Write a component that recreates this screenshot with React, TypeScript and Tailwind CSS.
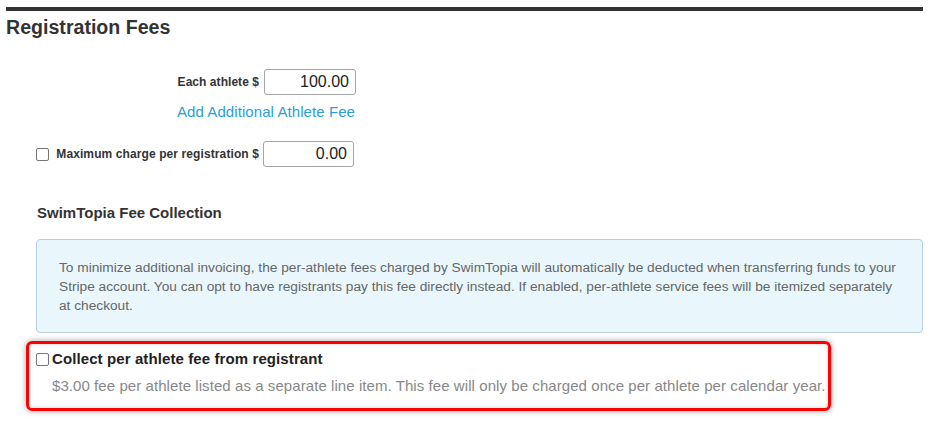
import React from "react";

function Box() {
  return <span className="block w-[13px] h-[13px] shrink-0 rounded-[2px] border border-[#767676] bg-white" />;
}

export default function App() {
  return (
    <div className="min-h-[422px] bg-white font-['Liberation_Sans',Arial,sans-serif] text-[#333]">
      <div className="pt-[7px] ml-[6px] w-[917px]">
        <div className="border-t-4 border-[#333]" />
        <h1 className="mt-[5px] text-[19.6px] leading-[22px] font-bold text-[#333]">Registration Fees</h1>

        <div className="mt-[31px] flex items-center h-[26px]">
          <div className="w-[253px] text-right text-[12px] font-bold leading-[14px] tracking-[0.05px]">Each athlete $</div>
          <div className="ml-[5px] w-[92px] h-[26px] rounded-[3px] border border-[#a5a5a5] bg-white text-right pr-[6px] text-[16px] leading-[24px] text-[#222]">
            100.00
          </div>
        </div>
        <div className="mt-[8px] flex">
          <div className="w-[349px] text-right text-[15px] leading-[18px] text-[#2a9fd6] tracking-[0.08px]">Add Additional Athlete Fee</div>
        </div>

        <div className="mt-[20px] flex items-center h-[26px]">
          <div className="w-[253px] flex items-center justify-end">
            <Box />
            <span className="ml-[7px] text-[12px] font-bold leading-[14px] whitespace-nowrap tracking-[0.1px]">Maximum charge per registration $</span>
          </div>
          <div className="ml-[4px] w-[91px] h-[26px] rounded-[3px] border border-[#a5a5a5] bg-white text-right pr-[6px] text-[16px] leading-[24px] text-[#222]">
            0.00
          </div>
        </div>

        <h2 className="mt-[37px] ml-[31px] text-[15px] leading-[18px] font-bold text-[#333]">SwimTopia Fee Collection</h2>

        <div className="mt-[17px] ml-[30px] w-[887px] rounded-[4px] border border-[#b9cfe0] bg-[#e9f7fd] pl-[22px] pr-[10px] pt-[18px] pb-[17px] text-[13.7px] leading-[19px] text-[#666] whitespace-nowrap">
          To minimize additional invoicing, the per-athlete fees charged by SwimTopia will automatically be deducted when transferring funds to your
          <br />
          Stripe account. You can opt to have registrants pay this fee directly instead. If enabled, per-athlete service fees will be itemized separately
          <br />
          at checkout.
        </div>

        <div className="mt-[8px] ml-[20px] w-[805px] rounded-[6px] border-[3px] border-[#ff0000] pl-[7px] pt-[6px] pb-[13px] shadow-[0_0_6px_rgba(0,0,0,0.35),inset_0_0_4px_rgba(0,0,0,0.2)]">
          <div className="flex items-center">
            <Box />
            <span className="ml-[3px] text-[15px] leading-[18px] font-bold text-[#222] tracking-[0.1px]">Collect per athlete fee from registrant</span>
          </div>
          <div className="mt-[9px] ml-[16px] text-[15px] leading-[18px] text-[#888] whitespace-nowrap tracking-[0.07px]">
            $3.00 fee per athlete listed as a separate line item. This fee will only be charged once per athlete per calendar year.
          </div>
        </div>
      </div>
    </div>
  );
}
